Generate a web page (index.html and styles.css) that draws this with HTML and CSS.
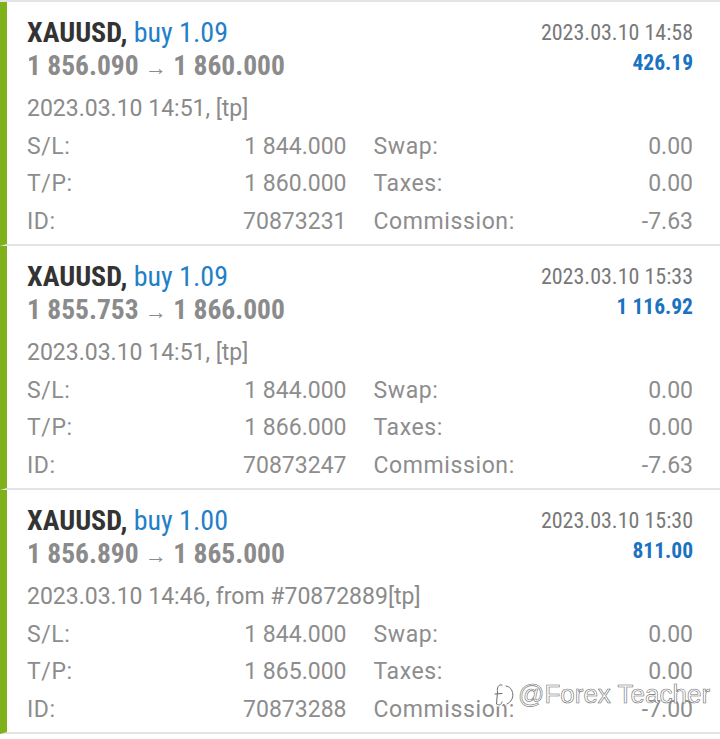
FILE: index.html
```html
<!DOCTYPE html>
<html lang="en">
<head>
<meta charset="utf-8">
<title>Deals</title>
<link rel="stylesheet" href="styles.css">
</head>
<body>
<div class="list">
  <div class="deal">
    <div class="head">
      <div class="main">
        <div class="title"><span class="sym">XAUUSD,</span> <span class="side">buy 1.09</span></div>
        <div class="price">1 856.090 <span class="arrow">→</span> 1 860.000</div>
      </div>
      <div class="meta">
        <div class="time">2023.03.10 14:58</div>
        <div class="profit">426.19</div>
      </div>
    </div>
    <div class="opened">2023.03.10 14:51, [tp]</div>
    <div class="grid">
      <div class="pair"><span class="k">S/L:</span><span>1 844.000</span></div>
      <div class="pair"><span class="k">Swap:</span><span>0.00</span></div>
      <div class="pair"><span class="k">T/P:</span><span>1 860.000</span></div>
      <div class="pair"><span class="k">Taxes:</span><span>0.00</span></div>
      <div class="pair"><span class="k">ID:</span><span>70873231</span></div>
      <div class="pair"><span class="k">Commission:</span><span>-7.63</span></div>
    </div>
  </div>
  <div class="deal">
    <div class="head">
      <div class="main">
        <div class="title"><span class="sym">XAUUSD,</span> <span class="side">buy 1.09</span></div>
        <div class="price">1 855.753 <span class="arrow">→</span> 1 866.000</div>
      </div>
      <div class="meta">
        <div class="time">2023.03.10 15:33</div>
        <div class="profit">1 116.92</div>
      </div>
    </div>
    <div class="opened">2023.03.10 14:51, [tp]</div>
    <div class="grid">
      <div class="pair"><span class="k">S/L:</span><span>1 844.000</span></div>
      <div class="pair"><span class="k">Swap:</span><span>0.00</span></div>
      <div class="pair"><span class="k">T/P:</span><span>1 866.000</span></div>
      <div class="pair"><span class="k">Taxes:</span><span>0.00</span></div>
      <div class="pair"><span class="k">ID:</span><span>70873247</span></div>
      <div class="pair"><span class="k">Commission:</span><span>-7.63</span></div>
    </div>
  </div>
  <div class="deal">
    <div class="head">
      <div class="main">
        <div class="title"><span class="sym">XAUUSD,</span> <span class="side">buy 1.00</span></div>
        <div class="price">1 856.890 <span class="arrow">→</span> 1 865.000</div>
      </div>
      <div class="meta">
        <div class="time">2023.03.10 15:30</div>
        <div class="profit">811.00</div>
      </div>
    </div>
    <div class="opened">2023.03.10 14:46, from #70872889[tp]</div>
    <div class="grid">
      <div class="pair"><span class="k">S/L:</span><span>1 844.000</span></div>
      <div class="pair"><span class="k">Swap:</span><span>0.00</span></div>
      <div class="pair"><span class="k">T/P:</span><span>1 865.000</span></div>
      <div class="pair"><span class="k">Taxes:</span><span>0.00</span></div>
      <div class="pair"><span class="k">ID:</span><span>70873288</span></div>
      <div class="pair"><span class="k">Commission:</span><span>-7.00</span></div>
    </div>
  </div>
</div>
<div class="watermark">
  <svg class="zh" width="24" height="28" viewBox="0 0 24 28" aria-hidden="true">
    <g fill="none" stroke-linecap="round" stroke-linejoin="round">
      <path d="M9 4 C5 3 4 7 4.5 11 L3.5 23 M2 13 L9 12.5 M4 23 C6 25 8 24 9 21" stroke="#fff" stroke-width="3.6"/>
      <path d="M9 4 C5 3 4 7 4.5 11 L3.5 23 M2 13 L9 12.5 M4 23 C6 25 8 24 9 21" stroke="#6a6a6a" stroke-width="1"/>
      <path d="M13 5 C21 6 23 19 14 23" stroke="#fff" stroke-width="3.6"/>
      <path d="M13 5 C21 6 23 19 14 23" stroke="#6a6a6a" stroke-width="1"/>
    </g>
  </svg>
  <span class="wm-text">@Forex Teacher</span>
</div>
</body>
</html>
```

FILE: styles.css
```css
* { box-sizing: border-box; }
html, body { margin: 0; padding: 0; background: #ffffff; }
body {
  font-family: Roboto, "Liberation Sans", sans-serif;
  width: 720px;
  height: 739px;
  overflow: hidden;
  position: relative;
}
.list {
  border-top: 2px solid #e4e4e4;
}
.deal {
  border-left: 7px solid #7fb21a;
  border-bottom: 2px solid #e4e4e4;
  padding: 15px 27px 4px 20px;
}
.head {
  display: flex;
  justify-content: space-between;
  align-items: flex-start;
}
.title {
  font-size: 28px;
  line-height: 31px;
  font-stretch: 87.5%;
  white-space: nowrap;
}
.sym { font-weight: 700; color: #333333; }
.side { font-weight: 400; color: #1f80c8; }
.price {
  margin-top: 2px;
  height: 31px;
  font-size: 27.5px;
  line-height: 31px;
  font-weight: 700;
  font-stretch: 87.5%;
  color: #8b8b8b;
  white-space: nowrap;
}
.arrow {
  font-weight: 400;
  font-size: 22px;
  line-height: 1;
}
.meta {
  text-align: right;
  padding-top: 1px;
}
.time {
  font-size: 22px;
  line-height: 30px;
  font-stretch: 87.5%;
  color: #787878;
}
.profit {
  font-size: 21.5px;
  line-height: 30px;
  font-weight: 700;
  font-stretch: 87.5%;
  color: #1b72c0;
}
.opened {
  margin-top: 9px;
  font-size: 23px;
  line-height: 37.5px;
  color: #8a8a8a;
  white-space: nowrap;
}
.grid {
  display: grid;
  grid-template-columns: 1fr 1fr;
  column-gap: 27px;
  font-size: 23px;
  line-height: 37.5px;
  color: #8d8d8d;
}
.pair {
  display: flex;
  justify-content: space-between;
}
.k { letter-spacing: 0.6px; }
.watermark {
  position: absolute;
  left: 493px;
  top: 679px;
  display: flex;
  align-items: center;
  gap: 1px;
}
.wm-text {
  font-family: "Liberation Sans", sans-serif;
  font-size: 26px;
  color: #ffffff;
  -webkit-text-stroke: 0.6px #707070;
  white-space: nowrap;
}
```
